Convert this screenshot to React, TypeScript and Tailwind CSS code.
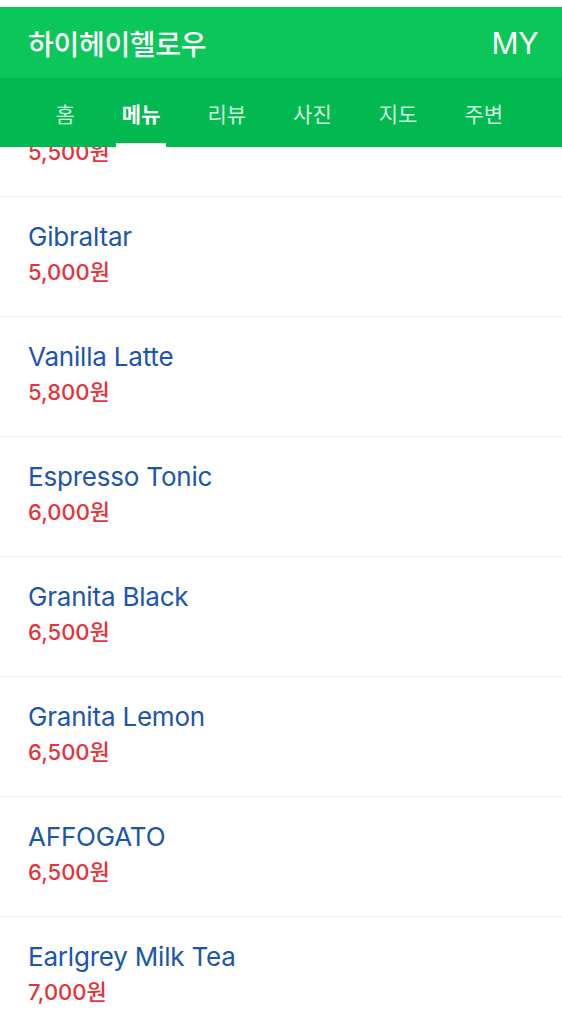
import React from 'react'

type MenuItem = {
  name: string
  price: string
}

const tabs = ['홈', '메뉴', '리뷰', '사진', '지도', '주변']

const items: MenuItem[] = [
  { name: 'Cold Brew', price: '5,500원' },
  { name: 'Gibraltar', price: '5,000원' },
  { name: 'Vanilla Latte', price: '5,800원' },
  { name: 'Espresso Tonic', price: '6,000원' },
  { name: 'Granita Black', price: '6,500원' },
  { name: 'Granita Lemon', price: '6,500원' },
  { name: 'AFFOGATO', price: '6,500원' },
  { name: 'Earlgrey Milk Tea', price: '7,000원' },
]

const font = { fontFamily: 'Inter, "Noto Sans CJK KR", sans-serif' }

export default function App() {
  return (
    <div className="w-[562px] h-[1024px] overflow-hidden bg-white" style={font}>
      <div className="h-[7px] bg-white" />

      {/* top bar */}
      <header className="h-[71px] bg-[#0bc75a] flex items-center justify-between pl-[28px] pr-[24px]">
        <h1 className="text-[28px] leading-9 font-medium text-white tracking-[-0.3px]" style={{ fontFamily: '"Noto Sans CJK KR", sans-serif' }}>
          하이헤이헬로우
        </h1>
        <span className="text-[30px] leading-9 text-white tracking-[-0.5px]">MY</span>
      </header>

      {/* tabs */}
      <nav className="h-[69px] bg-[#02b851] flex items-center pl-[32px]" style={{ fontFamily: '"Noto Sans CJK KR", sans-serif' }}>
        {tabs.map((tab) => {
          const active = tab === '메뉴'
          return (
            <div key={tab} className="relative h-[69px] flex items-center px-[23.5px]">
              <span className={active ? 'text-[21px] leading-7 font-bold text-white' : 'text-[21px] leading-7 text-white/80'}>{tab}</span>
              {active && <span className="absolute bottom-0 left-[18px] right-[18px] h-[4px] bg-white" />}
            </div>
          )
        })}
      </nav>

      {/* menu list, scrolled */}
      <div className="h-[877px] overflow-hidden">
        <ul className="-mt-[71px]">
          {items.map((item) => (
            <li key={item.name} className="h-[120px] border-t border-[#ececec] pl-[28px] pt-[24px]">
              <p className="text-[26px] leading-8 text-[#1b55b0] tracking-[-0.2px]">{item.name}</p>
              <p className="mt-[5px] text-[22px] leading-7 font-medium text-[#e53339]">{item.price}</p>
            </li>
          ))}
        </ul>
      </div>
    </div>
  )
}
